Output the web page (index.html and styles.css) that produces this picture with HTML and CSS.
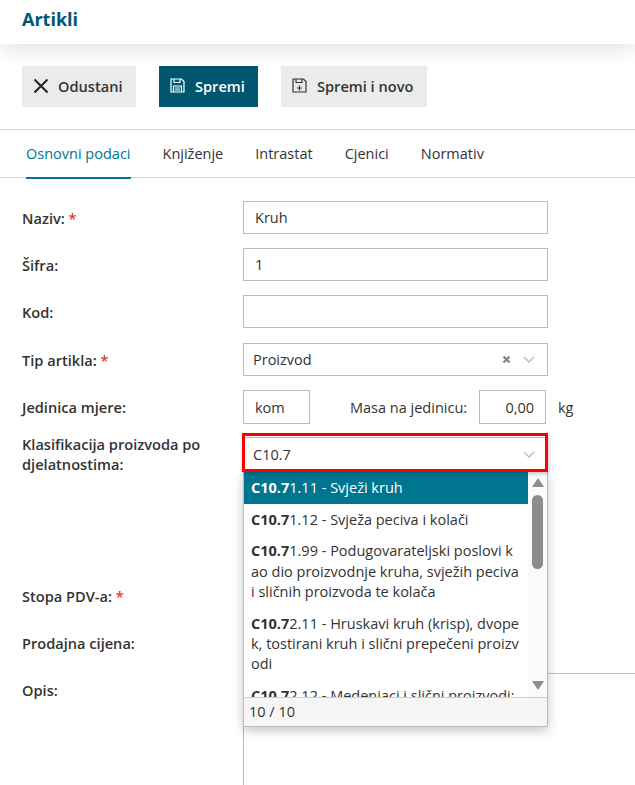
FILE: index.html
```html
<!DOCTYPE html>
<html lang="hr">
<head>
<meta charset="utf-8">
<title>Artikli</title>
<link rel="stylesheet" href="styles.css">
</head>
<body>
<div class="page">
  <header class="topbar"><h1 class="title">Artikli</h1></header>
  <div class="toolbar">
    <button class="btn btn-cancel">
      <svg class="ic-x" width="16" height="16" viewBox="0 0 16 16"><path d="M1.5 1.5l13 13M14.5 1.5l-13 13" fill="none" stroke="#222" stroke-width="2"/></svg>
      Odustani
    </button>
    <button class="btn btn-save">
      <svg width="15" height="15" viewBox="0 0 15 15" fill="none" stroke="#fff" stroke-width="1.2"><path d="M1 1h10.5L14 3.5V14H1z"/><path d="M4 1v3.5h6V1M3.5 14V8h8v6M5 10h5M5 12h5"/></svg>
      Spremi
    </button>
    <button class="btn btn-new">
      <svg width="15" height="15" viewBox="0 0 15 15" fill="none" stroke="#333" stroke-width="1.2"><path d="M1 1h10.5L14 3.5V14H1z"/><path d="M4 1v3.5h6V1M7.5 7.5v5M5 10h5"/></svg>
      Spremi i novo
    </button>
  </div>
  <nav class="tabs">
    <a class="tab tab-active">Osnovni podaci</a>
    <a class="tab">Knjiženje</a>
    <a class="tab">Intrastat</a>
    <a class="tab">Cjenici</a>
    <a class="tab">Normativ</a>
  </nav>
  <form class="form">
    <div class="row">
      <label class="label">Naziv: <span class="req">*</span></label>
      <div class="control input">Kruh</div>
    </div>
    <div class="row">
      <label class="label">Šifra:</label>
      <div class="control input">1</div>
    </div>
    <div class="row">
      <label class="label">Kod:</label>
      <div class="control input"></div>
    </div>
    <div class="row row-type">
      <label class="label">Tip artikla: <span class="req">*</span></label>
      <div class="control input select">
        <span class="grow">Proizvod</span>
        <svg class="clear" width="9" height="9" viewBox="0 0 9 9"><path d="M1.5 1.5l6 6M7.5 1.5l-6 6" stroke="#888" stroke-width="2.4" fill="none"/></svg>
        <svg class="chev" width="12" height="7" viewBox="0 0 12 7"><path d="M1 1l5 5 5-5" stroke="#bbb" stroke-width="1.3" fill="none"/></svg>
      </div>
    </div>
    <div class="row row-unit">
      <label class="label">Jedinica mjere:</label>
      <div class="unit-group">
        <div class="input unit">kom</div>
        <span class="mass-label">Masa na jedinicu:</span>
        <div class="input mass">0,00</div>
        <span class="kg">kg</span>
      </div>
    </div>
    <div class="row row-class">
      <label class="label label-top">Klasifikacija proizvoda po djelatnostima:</label>
      <div class="combo">
        <div class="input select combo-field">
          <span class="grow">C10.7</span>
          <svg class="chev" width="12" height="7" viewBox="0 0 12 7"><path d="M1 1l5 5 5-5" stroke="#bbb" stroke-width="1.3" fill="none"/></svg>
        </div>
        <div class="red-box"></div>
        <div class="dropdown">
          <div class="list-wrap">
            <ul class="list">
              <li class="item item-active"><b>C10.7</b>1.11 - Svježi kruh</li>
              <li class="item"><b>C10.7</b>1.12 - Svježa peciva i kolači</li>
              <li class="item"><b>C10.7</b>1.99 - Podugovarateljski poslovi kao dio proizvodnje kruha, svježih peciva i sličnih proizvoda te kolača</li>
              <li class="item"><b>C10.7</b>2.11 - Hruskavi kruh (krisp), dvopek, tostirani kruh i slični prepečeni proizvodi</li>
              <li class="item"><b>C10.7</b>2.12 - Medenjaci i slični proizvodi; slatki dvopek</li>
            </ul>
            <div class="scrollbar">
              <span class="arrow-up"></span>
              <span class="thumb"></span>
              <span class="arrow-down"></span>
            </div>
          </div>
          <div class="dd-footer">10 / 10</div>
        </div>
      </div>
    </div>
    <div class="row">
      <label class="label">Stopa PDV-a: <span class="req">*</span></label>
    </div>
    <div class="row">
      <label class="label">Prodajna cijena:</label>
    </div>
    <div class="row row-desc">
      <label class="label label-desc">Opis:</label>
      <div class="textarea"></div>
    </div>
  </form>
</div>
</body>
</html>
```

FILE: styles.css
```css
* { box-sizing: border-box; }
html, body { margin: 0; padding: 0; height: 100%; overflow: hidden; background: #fff; }
body { font-family: "Open Sans", sans-serif; font-size: 14.5px; color: #333; }
.page { width: 635px; height: 785px; overflow: hidden; }

.topbar { height: 44px; padding-left: 22px; background: #fff; box-shadow: 0 4px 22px rgba(0,0,0,.13); display: flex; align-items: center; }
.title { margin: 0 0 6px; font-size: 18px; font-weight: 700; color: #005670; }

.toolbar { display: flex; gap: 23px; padding: 22px 22px; height: 86px; border-bottom: 1px solid #d2d2d2; }
.btn { height: 41px; border: 0; font: 600 14.6px "Open Sans", sans-serif; display: flex; align-items: center; gap: 10px; padding: 0 11px 2px; color: #333; background: #ebebeb; }
.btn-cancel { width: 114px; gap: 9px; }
.btn-save { width: 99px; background: #005670; color: #fff; }
.btn-new { width: 146px; }

.tabs { display: flex; height: 48px; padding-left: 26px; gap: 32px; border-bottom: 1px solid #d8d8d8; }
.tab { height: 49px; line-height: 47px; color: #333; }
.tab-active { color: #00758f; border-bottom: 2px solid #00758f; }

.form { padding-top: 23px; }
.row { display: flex; align-items: center; min-height: 33px; margin-bottom: 14px; padding-left: 22px; }
.row-type { margin-top: 15px; }
.row-unit { margin-bottom: 13px; }
.label { flex: 0 0 221px; font-weight: 600; font-size: 14.6px; color: #333; line-height: 20px; }
.req { color: #e53935; }

.input { height: 33px; border: 1px solid #bbb; background: #fff; padding: 0 11px; display: flex; align-items: center; color: #333; }
.control { width: 305px; }
.select { padding-left: 9px; padding-right: 12px; }
.grow { flex: 1; }
.clear { margin-right: 12px; }

.unit-group { display: flex; align-items: center; height: 34px; }
.unit { width: 67px; height: 34px; }
.mass-label { margin-left: 40px; width: 129px; }
.mass { width: 67px; height: 34px; justify-content: flex-end; }
.kg { margin-left: 12px; }

.row-class { align-items: flex-start; height: 128px; }
.label-top { margin-top: -3px; }
.combo { position: relative; width: 305px; height: 33px; }
.combo-field { height: 34px; }
.red-box { position: absolute; left: -1px; right: 0; top: -4px; height: 39px; border: 3px solid #f00; z-index: 3; box-shadow: 1px 2px 4px rgba(0,0,0,.2); pointer-events: none; }
.dropdown { position: absolute; left: 0; top: 35px; width: 305px; height: 255px; background: #fff; border: 1px solid #bbb; border-top: 0; z-index: 2; box-shadow: 0 4px 10px rgba(0,0,0,.22); display: flex; flex-direction: column; }
.list-wrap { flex: 0 0 225px; display: flex; overflow: hidden; }
.list { flex: 0 0 284px; list-style: none; margin: 0; padding: 0; overflow: hidden; }
.item { padding: 6px 7px 5.2px; line-height: 20.4px; word-break: break-all; color: #333; }
.item b { font-weight: 700; }
.item-active { background: #00758f; color: #fff; }
.scrollbar { flex: 1; background: #fafafa; display: flex; flex-direction: column; align-items: center; padding-top: 6px; }
.arrow-up { width: 0; height: 0; border: 6.5px solid transparent; border-top: 0; border-bottom: 9px solid #8c8c8c; }
.thumb { width: 11px; height: 74px; margin-top: 8px; border-radius: 6px; background: #8c8c8c; }
.arrow-down { width: 0; height: 0; margin-top: 112px; border: 6.5px solid transparent; border-bottom: 0; border-top: 9px solid #8c8c8c; }
.dd-footer { flex: 1; border-top: 1px solid #ccc; background: #f6f6f6; padding: 4px 5px; line-height: 20px; }

.row-desc { align-items: flex-start; margin: 0; }
.label-desc { padding-top: 7px; }
.textarea { flex: none; width: 500px; height: 200px; border: 1px solid #bbb; background: #fff; }
```
